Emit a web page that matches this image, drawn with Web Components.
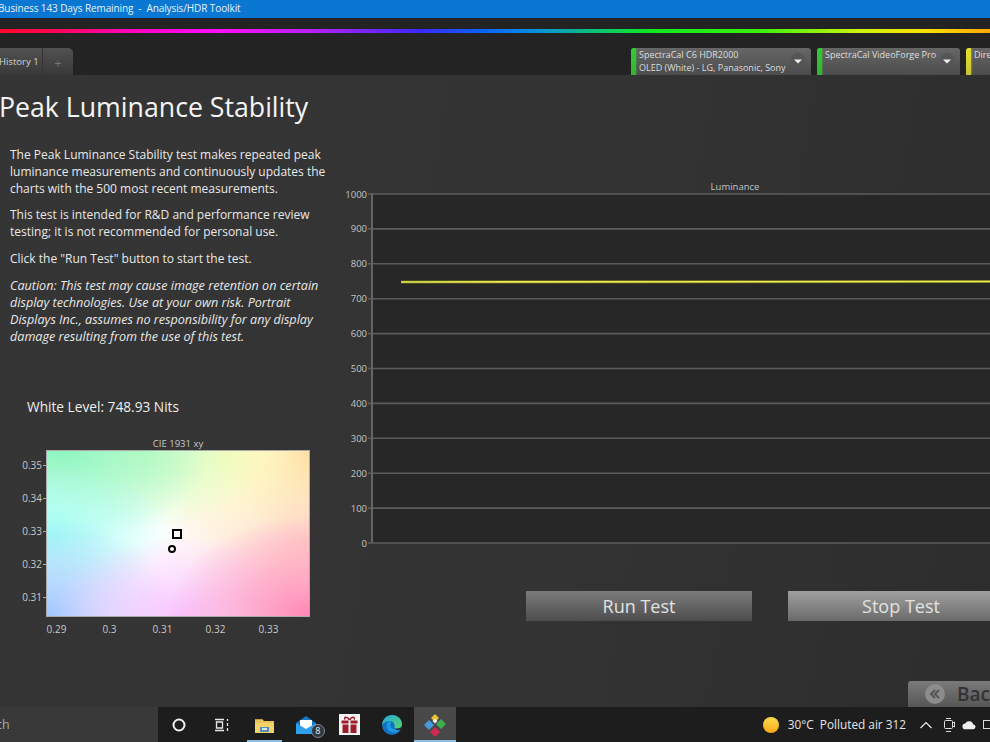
<!DOCTYPE html>
<html>
<head>
<meta charset="utf-8">
<title>Peak Luminance Stability</title>
<style>
  html, body { margin: 0; padding: 0; background: #333; }
  body { width: 990px; height: 742px; overflow: hidden; font-family: "Open Sans", "Noto Sans", sans-serif; }
</style>
</head>
<body>
<app-shell>
  <title-bar>Business 143 Days Remaining  -  Analysis/HDR Toolkit</title-bar>
  <top-band>
    <history-tab slot="tabs">History 1</history-tab>
    <sensor-chip slot="chips" color="#2ecc2e" style="--w:180px">SpectraCal C6 HDR2000<br>OLED (White) - LG, Panasonic, Sony</sensor-chip>
    <sensor-chip slot="chips" color="#2ecc2e" style="--w:143px">SpectraCal VideoForge Pro</sensor-chip>
    <sensor-chip slot="chips" color="#e6e02a" style="--w:60px" noarrow>Direct</sensor-chip>
  </top-band>
  <main-area>
    <info-panel slot="left"></info-panel>
    <luminance-chart slot="right"></luminance-chart>
    <test-button slot="buttons" style="--fill:linear-gradient(#7c7c7c,#4d4d4d)">Run Test</test-button>
    <test-button slot="buttons" style="--fill:linear-gradient(#a0a0a0,#6a6a6a)">Stop Test</test-button>
    <back-button slot="back">Back</back-button>
  </main-area>
  <task-bar></task-bar>
</app-shell>

<script>
// small helper so each component only declares css + html
function shadow(el, css, html) {
  el.attachShadow({ mode: 'open' }).innerHTML = `<style>${css}</style>${html}`;
}

class AppShell extends HTMLElement {
  connectedCallback() {
    shadow(this, `
      :host { display: flex; flex-direction: column; width: 990px; height: 742px; overflow: hidden; }
    `, `<slot></slot>`);
  }
}

class TitleBar extends HTMLElement {
  connectedCallback() {
    shadow(this, `
      :host { display: block; flex: none; height: 18px; background: #0a78d2; color: #e8f2fb;
        font: 10px/17px "Open Sans", sans-serif; letter-spacing: -0.1px; white-space: pre; overflow: hidden; }
      span { display: block; margin-left: -2px; }
    `, `<span><slot></slot></span>`);
  }
}

class TopBand extends HTMLElement {
  connectedCallback() {
    shadow(this, `
      :host { display: block; flex: none; height: 57px; background: #232323; overflow: hidden; }
      .rainbow { height: 4px; margin-top: 11px; filter: blur(.6px) saturate(1.2);
        background: linear-gradient(90deg, #f01030 0, #f0105a 60px, #f010a8 130px, #e818e0 210px, #a828f0 310px,
          #3c2ce8 420px, #1860e8 480px, #1890c8 540px, #20b880 590px, #28e038 650px, #50e828 760px,
          #d0f030 860px, #f8dc20 930px, #f8a820 990px); }
      .row { display: flex; justify-content: space-between; align-items: flex-end; height: 42px; }
      .chips { display: flex; gap: 6px; margin-right: -36px; }
    `, `
      <div class="rainbow"></div>
      <div class="row">
        <slot name="tabs"></slot>
        <div class="chips"><slot name="chips"></slot></div>
      </div>`);
  }
}

class HistoryTab extends HTMLElement {
  connectedCallback() {
    shadow(this, `
      :host { display: flex; height: 27px; width: 73px; border-radius: 0 5px 0 0; overflow: hidden;
        background: linear-gradient(#525252, #383838); color: #d4d4d4; font: 9.5px/27px "Open Sans", sans-serif; }
      .name { width: 43px; flex: none; white-space: nowrap; border-right: 1px solid #333; box-sizing: border-box; }
      .name span { display: block; margin-left: -1px; }
      .plus { flex: 1; text-align: center; color: #777; font-size: 12px; line-height: 31px; }
    `, `<div class="name"><span><slot></slot></span></div><div class="plus">+</div>`);
  }
}

class SensorChip extends HTMLElement {
  connectedCallback() {
    const color = this.getAttribute('color');
    const arrow = this.hasAttribute('noarrow') ? '' : `
      <svg width="18" height="18" viewBox="0 0 18 18"><ellipse cx="9" cy="6" rx="7" ry="6" fill="#555"/><path d="M5 6.500h8L9 10.500z" fill="#eee"/></svg>`;
    shadow(this, `
      :host { display: flex; flex: none; width: var(--w); height: 27px; box-sizing: border-box;
        border-radius: 3px 3px 0 0; background: linear-gradient(#666, #4c4c4c); color: #dedede;
        font: 9px/12.5px "Open Sans", sans-serif; white-space: nowrap; overflow: hidden; }
      .bar { width: 5px; flex: none; background: linear-gradient(${color}, ${color}cc); box-shadow: 0 0 2px ${color}; }
      .txt { padding: 1px 0 0 3px; flex: 1; }
      svg { align-self: center; margin: 0 4px 0 0; flex: none; }
    `, `<div class="bar"></div><div class="txt"><slot></slot></div>${arrow}`);
  }
}

class MainArea extends HTMLElement {
  connectedCallback() {
    shadow(this, `
      :host { display: flex; flex-direction: column; flex: none; height: 632px; overflow: hidden;
        background: linear-gradient(100deg, #353535 0, #333 60%, #2d2d2d 100%); }
      .cols { display: flex; flex: none; height: 606px; }
      .left { width: 345px; flex: none; }
      .right { flex: 1; min-width: 0; }
      .buttons { display: flex; gap: 36px; margin-top: 31px; padding-left: 181px; }
      .foot { display: flex; justify-content: flex-end; height: 26px; }
    `, `
      <div class="cols">
        <div class="left"><slot name="left"></slot></div>
        <div class="right">
          <slot name="right"></slot>
          <div class="buttons"><slot name="buttons"></slot></div>
        </div>
      </div>
      <div class="foot"><slot name="back"></slot></div>`);
  }
}

class InfoPanel extends HTMLElement {
  connectedCallback() {
    shadow(this, `
      :host { display: block; color: #e8e8e8; white-space: nowrap; }
      h1 { margin: 13px 0 0 -1px; font: 400 26.7px/38px "Open Sans", sans-serif; color: #f4f4f4; }
      .copy { margin: 20px 0 0 10px; font-size: 12px; line-height: 17px; }
      p { margin: 0 0 9.5px; }
      p:nth-child(1) { margin-bottom: 8.5px; }
      p:nth-child(2) { margin-bottom: 10.5px; }
      em { font-style: italic; font-size: 12.6px; }
      .level { margin: 52px 0 0 27px; font-size: 13.7px; line-height: 20px; color: #eee; }
    `, `
      <h1>Peak Luminance Stability</h1>
      <div class="copy">
        <p>The Peak Luminance Stability test makes repeated peak<br>luminance measurements and continuously updates the<br>charts with the 500 most recent measurements.</p>
        <p>This test is intended for R&amp;D and performance review<br>testing; it is not recommended for personal use.</p>
        <p>Click the "Run Test" button to start the test.</p>
        <p><em>Caution: This test may cause image retention on certain<br>display technologies. Use at your own risk. Portrait<br>Displays Inc., assumes no responsibility for any display<br>damage resulting from the use of this test.</em></p>
      </div>
      <div class="level">White Level: 748.93 Nits</div>
      <cie-plot></cie-plot>`);
  }
}

class CiePlot extends HTMLElement {
  connectedCallback() {
    const ys = ['0.35', '0.34', '0.33', '0.32', '0.31'].map(t => `<span>${t}<i></i></span>`).join('');
    const xs = ['0.29', '0.3', '0.31', '0.32', '0.33'].map(t => `<span><i></i>${t}</span>`).join('');
    shadow(this, `
      :host { display: block; margin: 21px 0 0 0; color: #c8c8c8; font: 10px/12px "Open Sans", sans-serif; }
      .title { margin-left: 46px; width: 264px; text-align: center; height: 12px; font-size: 9.5px; }
      .mid { display: flex; height: 167px; }
      .y { width: 46px; flex: none; box-sizing: border-box; padding-top: 9px; }
      .y span { display: flex; height: 33.2px; justify-content: flex-end; align-items: flex-start; }
      .y i { width: 3px; height: 1px; background: #aaa; margin: 6px 0 0 1px; }
      .map { position: relative; width: 264px; height: 167px; box-sizing: border-box; border: 1px solid #aaa;
        background:
          radial-gradient(ellipse 140px 100px at 100% 100%, #ff86b4 0, #ff86b400 100%),
          radial-gradient(ellipse 125px 80px at 50% 100%, #f8c4ff 0, #f8c4ff00 100%),
          radial-gradient(ellipse 125px 100px at 0 100%, #a0c6ff 0, #a0c6ff00 100%),
          radial-gradient(ellipse 125px 70px at 0 50%, #a0fff4 0, #a0fff400 100%),
          radial-gradient(ellipse 150px 95px at 5% 0, #8cf6c0 0, #8cf6c000 100%),
          radial-gradient(ellipse 115px 80px at 38% 0, #ccfcc4 0, #ccfcc400 100%),
          radial-gradient(ellipse 100px 100px at 70% 0, #fdfbb8 0, #fdfbb800 100%),
          radial-gradient(ellipse 90px 90px at 100% 0, #ffd69c 0, #ffd69c00 100%),
          radial-gradient(ellipse 150px 90px at 100% 55%, #ffd4c8 0, #ffd4c800 100%),
          #fff; }
      .square { position: absolute; left: 125px; top: 78px; width: 6px; height: 6px; border: 2px solid #000; }
      .circle { position: absolute; left: 121px; top: 94px; width: 4px; height: 4px; border: 2px solid #000; border-radius: 50%; background: #fff; }
      .x { display: flex; margin: 0 0 0 30px; }
      .x span { width: 53px; flex: none; text-align: center; display: block; }
      .x i { display: block; width: 1px; height: 3px; margin: -4px auto 7px; background: #aaa; }
    `, `
      <div class="title">CIE 1931 xy</div>
      <div class="mid">
        <div class="y">${ys}</div>
        <div class="map"><div class="square"></div><div class="circle"></div></div>
      </div>
      <div class="x">${xs}</div>`);
  }
}

class LuminanceChart extends HTMLElement {
  connectedCallback() {
    // y axis 0..1000 maps to 543..194 page px
    let grid = '', labels = '';
    for (let v = 0; v <= 1000; v += 100) {
      const y = 363 - v * 0.349;
      grid += `<line x1="23" x2="660" y1="${y}" y2="${y}" stroke="#5c5c5c" stroke-width="1.6"/>`;
      labels += `<text x="22" y="${y + 3.5}" text-anchor="end">${v}</text>`;
    }
    shadow(this, `
      :host { display: block; height: 380px; margin-top: 105px; }
      svg { display: block; overflow: visible; }
      text { font: 9.5px "Open Sans", sans-serif; fill: #c4c4c4; }
    `, `
      <svg width="645" height="380" viewBox="0 0 645 380">
        <rect x="27" y="14" width="640" height="349" fill="#272727"/>
        ${grid}
        <line x1="27" x2="27" y1="14" y2="363" stroke="#646464" stroke-width="2"/>
        ${labels}
        <text x="390" y="10" text-anchor="middle">Luminance</text>
        <line x1="56" x2="660" y1="102" y2="101.5" stroke="#6a6a20" stroke-width="3.2"/>
        <line x1="56" x2="660" y1="102" y2="101.5" stroke="#eeee50" stroke-width="1.6"/>
      </svg>`);
  }
}

class TestButton extends HTMLElement {
  connectedCallback() {
    shadow(this, `
      :host { display: block; flex: none; width: 226px; height: 30px;
        background: var(--fill); color: #e2e2e2; text-align: center; font: 18px/30px "Open Sans", sans-serif; }
    `, `<slot></slot>`);
  }
}

class BackButton extends HTMLElement {
  connectedCallback() {
    shadow(this, `
      :host { display: flex; align-items: center; flex: none; width: 82px; height: 26px; border-radius: 3px 0 0 0;
        background: linear-gradient(#7a7a7a, #565656); color: #333; font: 600 19px/26px "Open Sans", sans-serif; overflow: hidden; white-space: nowrap; }
      svg { margin: 0 11px 0 16px; flex: none; }
    `, `
      <svg width="22" height="22" viewBox="0 0 22 22"><circle cx="11" cy="11" r="10" fill="#8c8c8c"/><path d="M11 7l-4 4 4 4M15 7l-4 4 4 4" fill="none" stroke="#555" stroke-width="2"/></svg>
      <slot></slot>`);
  }
}

class TaskBar extends HTMLElement {
  connectedCallback() {
    shadow(this, `
      :host { display: flex; align-items: stretch; flex: none; height: 35px; background: #1d1d1d; color: #e6e6e6; overflow: hidden;
        font: 11.8px/35px "Open Sans", sans-serif; }
      .search { width: 158px; flex: none; background: #393939; color: #a8a8a8; font-size: 12.5px; overflow: hidden; }
      .search span { display: block; margin-left: -30px; }
      .apps { display: flex; flex: none; }
      .app { width: 42.6px; flex: none; display: flex; align-items: center; justify-content: center; position: relative; }
      .app.on::after { content: ''; position: absolute; left: 4px; right: 4px; bottom: 0; height: 2px; background: #8cbce0; }
      .app.sel { background: #484848; }
      .app.sel::after { left: 0; right: 0; }
      .tray { display: flex; align-items: center; margin-left: auto; margin-right: -10px; flex: none; white-space: pre; }
      .tray svg { flex: none; }
      .badge { position: absolute; left: 25px; top: 17px; width: 14px; height: 14px; border-radius: 50%; background: #2a3a44; border: 1px solid #889; box-sizing: border-box;
        color: #eee; font: 9px/12px "Open Sans", sans-serif; text-align: center; }
    `, `
      <div class="search"><span>Search</span></div>
      <div class="apps">
        <div class="app"><svg width="16" height="16" viewBox="0 0 16 16"><circle cx="8" cy="8" r="5.5" fill="none" stroke="#f0f0f0" stroke-width="2"/></svg></div>
        <div class="app"><svg width="16" height="16" viewBox="0 0 16 16" fill="none" stroke="#e8e8e8" stroke-width="1.3"><path d="M1 2.500h9M1 13.500h9M2.500 5h6v6h-6zM13.500 2v2M13.500 6v3M13.500 11v3"/></svg></div>
        <div class="app on"><svg width="21" height="18" viewBox="0 0 21 18"><path d="M1 3h7l2 2h10v12H1z" fill="#e8c25a"/><path d="M1 3h7l1 1H1z" fill="#c89a30"/><rect x="1" y="7" width="19" height="10" fill="#f2d36a"/><rect x="6" y="11" width="9" height="5" fill="#5a8cb4"/><rect x="8" y="12" width="5" height="2" fill="#d8e4ec"/></svg></div>
        <div class="app"><svg width="24" height="20" viewBox="0 0 24 20"><path d="M1 8L11 1l10 7v11H1z" fill="#1478c8"/><path d="M5 5h12v7l-6 3-6-3z" fill="#fff"/><path d="M1 8l10 6 10-6v11H1z" fill="#2ea0ec"/></svg><div class="badge">8</div></div>
        <div class="app"><svg width="21" height="21" viewBox="0 0 21 21"><rect width="21" height="21" fill="#f4f4f4"/><rect x="2.500" y="6.500" width="16" height="3" fill="#9c1c2c"/><rect x="3.500" y="10.500" width="14" height="8.500" fill="#9c1c2c"/><rect x="9.500" y="6" width="2" height="13" fill="#f4f4f4"/><path d="M10.500 6C8 2 4.500 3 6 5.500M10.500 6c2.500-4 6-3 4.500-.5" fill="none" stroke="#9c1c2c" stroke-width="1.500"/></svg></div>
        <div class="app"><svg width="22" height="22" viewBox="0 0 22 22"><defs><linearGradient id="eg" x1="0" y1="0" x2="1" y2="1"><stop offset="0" stop-color="#22a8e0"/><stop offset="1" stop-color="#58d468"/></linearGradient></defs><circle cx="11" cy="11" r="10" fill="#1470c4"/><path d="M1 11C1.500 5 6 1 11 1c6 0 10 4.500 10 9 0 3-2.500 4.500-5 4.500-2 0-3-1-2.500-2C14 9.500 12 7 9 7 5.500 7 3 8.500 1 11z" fill="url(#eg)"/><path d="M9 7c-3 1-4 4-3 7 1.500 3.500 5 5 8.500 4.500 2-.5 4-2 5-4-1 .5-2.500 1-4.500 1-3 0-5-1.500-5.500-3.500-.5-2 .5-4 1-5z" fill="#1c9ae0"/><path d="M15 14.500c2 .5 4 0 5.500-1.500l-.5 2.500-5 .5z" fill="#1d1d1d"/></svg></div>
        <div class="app on sel"><svg width="24" height="24" viewBox="0 0 24 24"><path d="M12 1l4 4-4 4-4-4z" fill="#e8c030"/><path d="M18 6l5 5-5 5-5-5z" fill="#3cb050"/><path d="M6 7l5 5-5 5-5-5z" fill="#4898e0"/><path d="M12 14l5 5-5 5-5-5z" fill="#d02850"/><path d="M12 5.500l2.500 2.500-2.500 2.500L9.500 8z" fill="#f0f0f0"/></svg></div>
      </div>
      <div class="tray">
        <svg width="16" height="16" viewBox="0 0 16 16" style="margin-right:9px"><defs><linearGradient id="sun" x1="0" y1="0" x2="0" y2="1"><stop offset="0" stop-color="#f8dc50"/><stop offset="1" stop-color="#f8a818"/></linearGradient></defs><circle cx="8" cy="8" r="8" fill="url(#sun)"/></svg>
        <span>30°C  Polluted air 312</span>
        <svg width="14" height="10" viewBox="0 0 14 10" style="margin:0 10px 0 13px"><path d="M1.500 8L7 2.500 12.500 8" fill="none" stroke="#eee" stroke-width="1.200"/></svg>
        <svg width="12" height="16" viewBox="0 0 12 16" style="margin-right:7px" fill="none" stroke="#ddd" stroke-width="1"><rect x="1.500" y="3.500" width="8" height="8" rx="1"/><path d="M3 1.500h5M3 14.500h5M9.500 6l2-1v5l-2-1"/></svg>
        <svg width="14" height="10" viewBox="0 0 15 10" style="margin-right:6px"><path d="M3.500 9.500a3 3 0 0 1 0-6 4.500 4.500 0 0 1 8.500 1 2.500 2.500 0 0 1 0 5z" fill="#eee"/></svg>
        <svg width="18" height="14" viewBox="0 0 18 14" fill="none" stroke="#ddd"><rect x="1.500" y="2.500" width="14" height="8"/></svg>
      </div>`);
  }
}

customElements.define('app-shell', AppShell);
customElements.define('title-bar', TitleBar);
customElements.define('top-band', TopBand);
customElements.define('history-tab', HistoryTab);
customElements.define('sensor-chip', SensorChip);
customElements.define('main-area', MainArea);
customElements.define('info-panel', InfoPanel);
customElements.define('cie-plot', CiePlot);
customElements.define('luminance-chart', LuminanceChart);
customElements.define('test-button', TestButton);
customElements.define('back-button', BackButton);
customElements.define('task-bar', TaskBar);
</script>
</body>
</html>
